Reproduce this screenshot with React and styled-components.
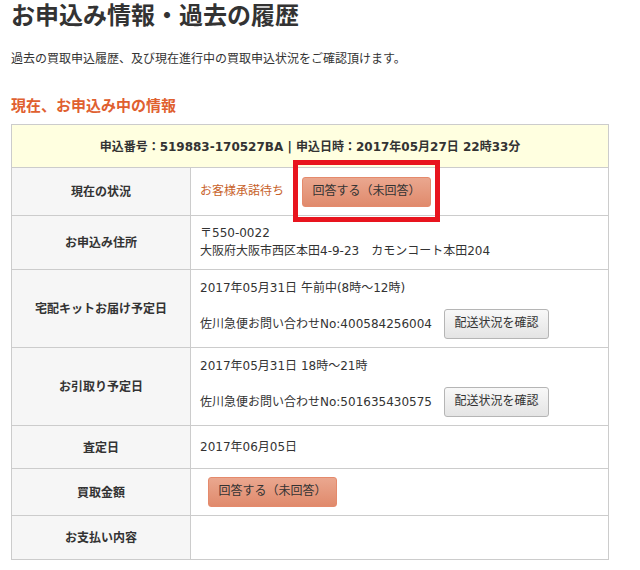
import styled, { createGlobalStyle } from 'styled-components';

const GlobalStyle = createGlobalStyle`
  html, body {
    margin: 0;
    background: #fff;
  }
  body {
    font-family: "DejaVu Sans", "Noto Sans CJK JP", sans-serif;
    font-size: 12px;
    color: #333;
  }
`;

const rows = [
  { label: '現在の状況', height: 47 },
  { label: 'お申込み住所', height: 53 },
  { label: '宅配キットお届け予定日', height: 77 },
  { label: 'お引取り予定日', height: 77 },
  { label: '査定日', height: 42 },
  { label: '買取金額', height: 46 },
  { label: 'お支払い内容', height: 43 },
];

function App() {
  return (
    <>
      <GlobalStyle />
      <Page>
        <Title>お申込み情報・過去の履歴</Title>
        <Lead>過去の買取申込履歴、及び現在進行中の買取申込状況をご確認頂けます。</Lead>
        <SectionTitle>現在、お申込み中の情報</SectionTitle>
        <InfoTable>
          <Notice>申込番号：519883-170527BA | 申込日時：2017年05月27日 22時33分</Notice>

          <Row $height={rows[0].height}>
            <Label>{rows[0].label}</Label>
            <Cell>
              <StatusLine>
                <Status>お客様承諾待ち</Status>
                <Highlight>
                  <AnswerButton>回答する（未回答）</AnswerButton>
                </Highlight>
              </StatusLine>
            </Cell>
          </Row>

          <Row $height={rows[1].height}>
            <Label>{rows[1].label}</Label>
            <TextCell>
              <Line>〒550-0022</Line>
              <Line>大阪府大阪市西区本田4-9-23　カモンコート本田204</Line>
            </TextCell>
          </Row>

          <Row $height={rows[2].height}>
            <Label>{rows[2].label}</Label>
            <TrackCell>
              <Line>2017年05月31日 午前中(8時～12時)</Line>
              <TrackLine>
                佐川急便お問い合わせNo:400584256004
                <TrackButton>配送状況を確認</TrackButton>
              </TrackLine>
            </TrackCell>
          </Row>

          <Row $height={rows[3].height}>
            <Label>{rows[3].label}</Label>
            <TrackCell>
              <Line>2017年05月31日 18時～21時</Line>
              <TrackLine>
                佐川急便お問い合わせNo:501635430575
                <TrackButton>配送状況を確認</TrackButton>
              </TrackLine>
            </TrackCell>
          </Row>

          <Row $height={rows[4].height}>
            <Label>{rows[4].label}</Label>
            <Cell>2017年06月05日</Cell>
          </Row>

          <Row $height={rows[5].height}>
            <Label>{rows[5].label}</Label>
            <Cell>
              <AmountButton>回答する（未回答）</AmountButton>
            </Cell>
          </Row>

          <Row $height={rows[6].height}>
            <Label>{rows[6].label}</Label>
            <Cell />
          </Row>
        </InfoTable>
      </Page>
    </>
  );
}

export default App;

const Page = styled.div`
  width: 598px;
  padding: 0 0 10px 11px;
`;

const Title = styled.h1`
  margin: 0;
  height: 33px;
  font-size: 24px;
  line-height: 32px;
  font-weight: 700;
  color: #333;
`;

const Lead = styled.p`
  margin: 17px 0 0;
  height: 18px;
  line-height: 18px;
  font-size: 12px;
  color: #333;
`;

const SectionTitle = styled.h2`
  margin: 27px 0 0;
  height: 29px;
  font-size: 15px;
  line-height: 22px;
  font-weight: 700;
  color: #e0602f;
`;

const InfoTable = styled.div`
  border: 1px solid #ccc;
`;

const Notice = styled.div`
  display: flex;
  align-items: center;
  justify-content: center;
  box-sizing: border-box;
  height: 42px;
  padding-bottom: 2px;
  background: #ffffe0;
  font-weight: 700;
  font-size: 12px;
  color: #333;
`;

const Row = styled.div`
  display: grid;
  grid-template-columns: 179px 1fr;
  min-height: ${({ $height }) => $height}px;
  border-top: 1px solid #ccc;
`;

const Label = styled.div`
  display: flex;
  align-items: center;
  justify-content: center;
  padding-bottom: 2px;
  background: #f6f6f6;
  border-right: 1px solid #ccc;
  font-weight: 700;
  font-size: 12px;
  color: #333;
`;

const Cell = styled.div`
  display: flex;
  flex-direction: column;
  justify-content: center;
  align-items: flex-start;
  padding: 0 9px;
  line-height: 18px;
`;

const TextCell = styled(Cell)`
  padding-bottom: 2px;
`;

const TrackCell = styled(Cell)`
  padding-top: 1px;
`;

const Line = styled.div`
  line-height: 18px;
`;

const StatusLine = styled.div`
  display: flex;
  align-items: center;
  gap: 18px;
`;

const Status = styled.span`
  margin-top: -2px;
  color: #c8622a;
`;

const Highlight = styled.div`
  position: relative;
  &::after {
    content: '';
    position: absolute;
    inset: -17px -9px -15px -9px;
    border: 5px solid #e8141e;
    pointer-events: none;
  }
`;

const AnswerButton = styled.button`
  display: block;
  width: 129px;
  height: 30px;
  padding: 0 0 2px;
  border: 1px solid #e58a6c;
  border-radius: 3px;
  background: linear-gradient(#eaa78f, #e08a6c);
  font: inherit;
  color: #333;
`;

const AmountButton = styled(AnswerButton)`
  margin-left: 8px;
`;

const TrackLine = styled.div`
  display: flex;
  align-items: center;
  margin-top: 12px;
  gap: 12px;
`;

const TrackButton = styled.button`
  width: 105px;
  height: 30px;
  padding: 0 0 2px;
  border: 1px solid #b5b5b5;
  border-radius: 3px;
  background: linear-gradient(#f8f8f8, #e4e4e4);
  font: inherit;
  color: #333;
`;
